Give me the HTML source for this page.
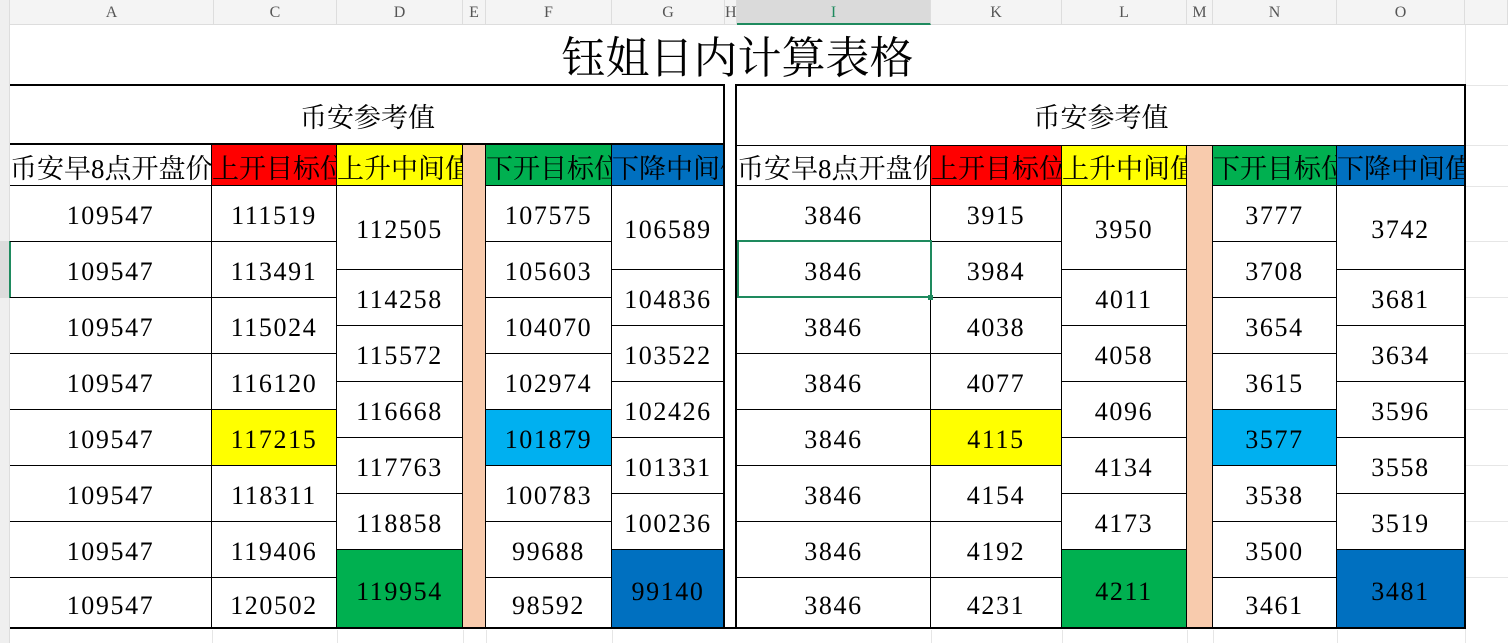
<!DOCTYPE html>
<html><head><meta charset="utf-8"><style>
*{margin:0;padding:0;box-sizing:border-box}
body{width:1508px;height:643px;overflow:hidden;background:#fff;position:relative;font-family:"Liberation Serif","Noto Serif CJK SC",serif;color:#000}
.a{position:absolute}
.c{position:absolute;border-right:1px solid #000;border-bottom:1px solid #000;overflow:hidden;white-space:nowrap;text-align:center;font-size:26px;letter-spacing:1.6px;display:flex;align-items:center;padding-top:5px}
.c span{display:block;width:100%;text-align:center}
.h{font-size:27px;letter-spacing:0;padding-top:2px}
.ch{position:absolute;top:0;height:25px;font-size:16px;color:#555;text-align:center;line-height:25px;border-right:1px solid #ddd}
.gl{position:absolute;background:#e6e6e6}
</style></head><body>
<div class="a" style="left:0;top:0;width:1508px;height:25px;background:#f4f4f4;border-bottom:1px solid #ddd"></div>
<div class="a" style="left:0;top:0;width:10px;height:643px;background:#efefef;border-right:1px solid #ddd"></div>
<div class="a" style="left:0;top:241px;width:10px;height:57px;background:#dcdcdc"></div>
<div class="a" style="left:9px;top:241px;width:2px;height:57px;background:#1e8a5e"></div>
<div class="ch" style="left:10px;width:204px">A</div>
<div class="ch" style="left:214px;width:123px">C</div>
<div class="ch" style="left:337px;width:126px">D</div>
<div class="ch" style="left:463px;width:23px">E</div>
<div class="ch" style="left:486px;width:126px">F</div>
<div class="ch" style="left:612px;width:113px">G</div>
<div class="ch" style="left:725px;width:12px">H</div>
<div class="ch" style="left:737px;width:194px;background:#dadada;border-bottom:2px solid #1e8a5e;color:#1e8a5e">I</div>
<div class="ch" style="left:931px;width:131px">K</div>
<div class="ch" style="left:1062px;width:125px">L</div>
<div class="ch" style="left:1187px;width:26px">M</div>
<div class="ch" style="left:1213px;width:124px">N</div>
<div class="ch" style="left:1337px;width:128px">O</div>
<div class="ch" style="left:1465px;width:43px"></div>
<div class="gl" style="left:1465px;top:25px;width:1px;height:618px"></div>
<div class="gl" style="left:1465px;top:85px;width:43px;height:1px"></div>
<div class="gl" style="left:1465px;top:145px;width:43px;height:1px"></div>
<div class="gl" style="left:1465px;top:186px;width:43px;height:1px"></div>
<div class="gl" style="left:1465px;top:241px;width:43px;height:1px"></div>
<div class="gl" style="left:1465px;top:297px;width:43px;height:1px"></div>
<div class="gl" style="left:1465px;top:353px;width:43px;height:1px"></div>
<div class="gl" style="left:1465px;top:409px;width:43px;height:1px"></div>
<div class="gl" style="left:1465px;top:465px;width:43px;height:1px"></div>
<div class="gl" style="left:1465px;top:521px;width:43px;height:1px"></div>
<div class="gl" style="left:1465px;top:577px;width:43px;height:1px"></div>
<div class="gl" style="left:212px;top:630px;width:1px;height:13px"></div>
<div class="gl" style="left:337px;top:630px;width:1px;height:13px"></div>
<div class="gl" style="left:463px;top:630px;width:1px;height:13px"></div>
<div class="gl" style="left:486px;top:630px;width:1px;height:13px"></div>
<div class="gl" style="left:612px;top:630px;width:1px;height:13px"></div>
<div class="gl" style="left:931px;top:630px;width:1px;height:13px"></div>
<div class="gl" style="left:1062px;top:630px;width:1px;height:13px"></div>
<div class="gl" style="left:1187px;top:630px;width:1px;height:13px"></div>
<div class="gl" style="left:1213px;top:630px;width:1px;height:13px"></div>
<div class="gl" style="left:1337px;top:630px;width:1px;height:13px"></div>

<div class="a" style="left:10px;top:26px;width:1455px;height:60px;text-align:center;font-size:44px;line-height:66px">钰姐日内计算表格</div>
<div class="a" style="left:10px;top:86px;width:715px;height:59px;text-align:center;font-size:27px;line-height:64px">币安参考值</div>
<div class="a" style="left:737px;top:86px;width:728px;height:59px;text-align:center;font-size:27px;line-height:64px">币安参考值</div>

<div class="c h" style="left:10px;top:145px;width:202px;height:41px"><span>币安早8点开盘价</span></div>
<div class="c h" style="left:212px;top:145px;width:125px;height:41px;background:#ff0000"><span>上开目标位</span></div>
<div class="c h" style="left:337px;top:145px;width:126px;height:41px;background:#ffff00"><span>上升中间值</span></div>
<div class="a" style="left:463px;top:145px;width:23px;height:484px;background:#f8cbad;border-right:1px solid #000"></div>
<div class="c h" style="left:486px;top:145px;width:126px;height:41px;background:#00b050"><span>下开目标位</span></div>
<div class="c h" style="left:612px;top:145px;width:113px;height:41px;background:#0070c0"><span>下降中间值</span></div>
<div class="c h" style="left:737px;top:145px;width:194px;height:41px"><span>币安早8点开盘价</span></div>
<div class="c h" style="left:931px;top:145px;width:131px;height:41px;background:#ff0000"><span>上开目标位</span></div>
<div class="c h" style="left:1062px;top:145px;width:125px;height:41px;background:#ffff00"><span>上升中间值</span></div>
<div class="a" style="left:1187px;top:145px;width:26px;height:484px;background:#f8cbad;border-right:1px solid #000"></div>
<div class="c h" style="left:1213px;top:145px;width:124px;height:41px;background:#00b050"><span>下开目标位</span></div>
<div class="c h" style="left:1337px;top:145px;width:128px;height:41px;background:#0070c0"><span>下降中间值</span></div>

<div class="c" style="left:10px;top:186px;width:202px;height:56px"><span>109547</span></div>
<div class="c" style="left:10px;top:242px;width:202px;height:56px"><span>109547</span></div>
<div class="c" style="left:10px;top:298px;width:202px;height:56px"><span>109547</span></div>
<div class="c" style="left:10px;top:354px;width:202px;height:56px"><span>109547</span></div>
<div class="c" style="left:10px;top:410px;width:202px;height:56px"><span>109547</span></div>
<div class="c" style="left:10px;top:466px;width:202px;height:56px"><span>109547</span></div>
<div class="c" style="left:10px;top:522px;width:202px;height:56px"><span>109547</span></div>
<div class="c" style="left:10px;top:578px;width:202px;height:51px"><span>109547</span></div>
<div class="c" style="left:212px;top:186px;width:125px;height:56px"><span>111519</span></div>
<div class="c" style="left:212px;top:242px;width:125px;height:56px"><span>113491</span></div>
<div class="c" style="left:212px;top:298px;width:125px;height:56px"><span>115024</span></div>
<div class="c" style="left:212px;top:354px;width:125px;height:56px"><span>116120</span></div>
<div class="c" style="left:212px;top:410px;width:125px;height:56px;background:#ffff00"><span>117215</span></div>
<div class="c" style="left:212px;top:466px;width:125px;height:56px"><span>118311</span></div>
<div class="c" style="left:212px;top:522px;width:125px;height:56px"><span>119406</span></div>
<div class="c" style="left:212px;top:578px;width:125px;height:51px"><span>120502</span></div>
<div class="c" style="left:337px;top:186px;width:126px;height:84px"><span>112505</span></div>
<div class="c" style="left:337px;top:270px;width:126px;height:56px"><span>114258</span></div>
<div class="c" style="left:337px;top:326px;width:126px;height:56px"><span>115572</span></div>
<div class="c" style="left:337px;top:382px;width:126px;height:56px"><span>116668</span></div>
<div class="c" style="left:337px;top:438px;width:126px;height:56px"><span>117763</span></div>
<div class="c" style="left:337px;top:494px;width:126px;height:56px"><span>118858</span></div>
<div class="c" style="left:337px;top:550px;width:126px;height:79px;background:#00b050"><span>119954</span></div>
<div class="c" style="left:486px;top:186px;width:126px;height:56px"><span>107575</span></div>
<div class="c" style="left:486px;top:242px;width:126px;height:56px"><span>105603</span></div>
<div class="c" style="left:486px;top:298px;width:126px;height:56px"><span>104070</span></div>
<div class="c" style="left:486px;top:354px;width:126px;height:56px"><span>102974</span></div>
<div class="c" style="left:486px;top:410px;width:126px;height:56px;background:#00b0f0"><span>101879</span></div>
<div class="c" style="left:486px;top:466px;width:126px;height:56px"><span>100783</span></div>
<div class="c" style="left:486px;top:522px;width:126px;height:56px"><span>99688</span></div>
<div class="c" style="left:486px;top:578px;width:126px;height:51px"><span>98592</span></div>
<div class="c" style="left:612px;top:186px;width:113px;height:84px"><span>106589</span></div>
<div class="c" style="left:612px;top:270px;width:113px;height:56px"><span>104836</span></div>
<div class="c" style="left:612px;top:326px;width:113px;height:56px"><span>103522</span></div>
<div class="c" style="left:612px;top:382px;width:113px;height:56px"><span>102426</span></div>
<div class="c" style="left:612px;top:438px;width:113px;height:56px"><span>101331</span></div>
<div class="c" style="left:612px;top:494px;width:113px;height:56px"><span>100236</span></div>
<div class="c" style="left:612px;top:550px;width:113px;height:79px;background:#0070c0"><span>99140</span></div>

<div class="c" style="left:737px;top:186px;width:194px;height:56px"><span>3846</span></div>
<div class="c" style="left:737px;top:242px;width:194px;height:56px"><span>3846</span></div>
<div class="c" style="left:737px;top:298px;width:194px;height:56px"><span>3846</span></div>
<div class="c" style="left:737px;top:354px;width:194px;height:56px"><span>3846</span></div>
<div class="c" style="left:737px;top:410px;width:194px;height:56px"><span>3846</span></div>
<div class="c" style="left:737px;top:466px;width:194px;height:56px"><span>3846</span></div>
<div class="c" style="left:737px;top:522px;width:194px;height:56px"><span>3846</span></div>
<div class="c" style="left:737px;top:578px;width:194px;height:51px"><span>3846</span></div>
<div class="c" style="left:931px;top:186px;width:131px;height:56px"><span>3915</span></div>
<div class="c" style="left:931px;top:242px;width:131px;height:56px"><span>3984</span></div>
<div class="c" style="left:931px;top:298px;width:131px;height:56px"><span>4038</span></div>
<div class="c" style="left:931px;top:354px;width:131px;height:56px"><span>4077</span></div>
<div class="c" style="left:931px;top:410px;width:131px;height:56px;background:#ffff00"><span>4115</span></div>
<div class="c" style="left:931px;top:466px;width:131px;height:56px"><span>4154</span></div>
<div class="c" style="left:931px;top:522px;width:131px;height:56px"><span>4192</span></div>
<div class="c" style="left:931px;top:578px;width:131px;height:51px"><span>4231</span></div>
<div class="c" style="left:1062px;top:186px;width:125px;height:84px"><span>3950</span></div>
<div class="c" style="left:1062px;top:270px;width:125px;height:56px"><span>4011</span></div>
<div class="c" style="left:1062px;top:326px;width:125px;height:56px"><span>4058</span></div>
<div class="c" style="left:1062px;top:382px;width:125px;height:56px"><span>4096</span></div>
<div class="c" style="left:1062px;top:438px;width:125px;height:56px"><span>4134</span></div>
<div class="c" style="left:1062px;top:494px;width:125px;height:56px"><span>4173</span></div>
<div class="c" style="left:1062px;top:550px;width:125px;height:79px;background:#00b050"><span>4211</span></div>
<div class="c" style="left:1213px;top:186px;width:124px;height:56px"><span>3777</span></div>
<div class="c" style="left:1213px;top:242px;width:124px;height:56px"><span>3708</span></div>
<div class="c" style="left:1213px;top:298px;width:124px;height:56px"><span>3654</span></div>
<div class="c" style="left:1213px;top:354px;width:124px;height:56px"><span>3615</span></div>
<div class="c" style="left:1213px;top:410px;width:124px;height:56px;background:#00b0f0"><span>3577</span></div>
<div class="c" style="left:1213px;top:466px;width:124px;height:56px"><span>3538</span></div>
<div class="c" style="left:1213px;top:522px;width:124px;height:56px"><span>3500</span></div>
<div class="c" style="left:1213px;top:578px;width:124px;height:51px"><span>3461</span></div>
<div class="c" style="left:1337px;top:186px;width:128px;height:84px"><span>3742</span></div>
<div class="c" style="left:1337px;top:270px;width:128px;height:56px"><span>3681</span></div>
<div class="c" style="left:1337px;top:326px;width:128px;height:56px"><span>3634</span></div>
<div class="c" style="left:1337px;top:382px;width:128px;height:56px"><span>3596</span></div>
<div class="c" style="left:1337px;top:438px;width:128px;height:56px"><span>3558</span></div>
<div class="c" style="left:1337px;top:494px;width:128px;height:56px"><span>3519</span></div>
<div class="c" style="left:1337px;top:550px;width:128px;height:79px;background:#0070c0"><span>3481</span></div>

<div class="a" style="left:10px;top:84px;width:715px;height:545px;border:2px solid #000;border-left:none"></div>
<div class="a" style="left:10px;top:143px;width:715px;height:2px;background:#000"></div>
<div class="a" style="left:735px;top:84px;width:731px;height:545px;border:2px solid #000"></div>
<div class="a" style="left:737px;top:145px;width:728px;height:1px;background:#000"></div>
<div class="a" style="left:10px;top:627px;width:1456px;height:2px;background:#000"></div>
<div class="a" style="left:737px;top:240px;width:195px;height:58px;border:2px solid #1e8a5e"></div>
<div class="a" style="left:928px;top:295px;width:5px;height:5px;background:#1e8a5e"></div>
</body></html>
